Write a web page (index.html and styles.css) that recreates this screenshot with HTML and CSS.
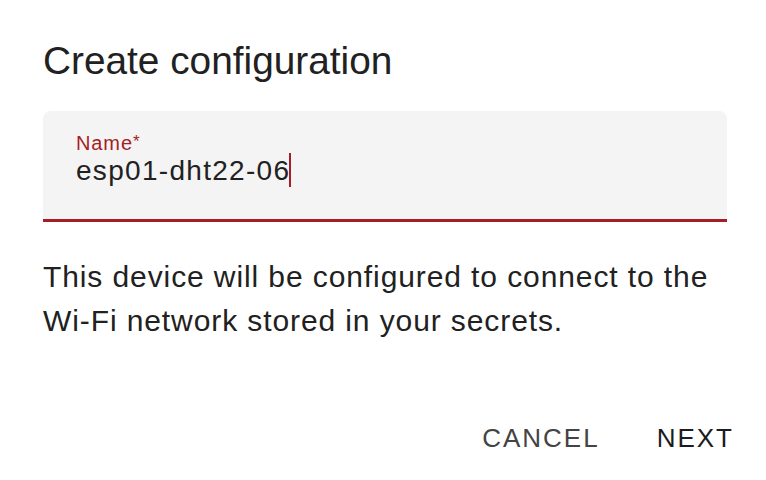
FILE: index.html
```html
<!DOCTYPE html>
<html lang="en">
<head>
<meta charset="utf-8">
<title>Create configuration</title>
<link rel="stylesheet" href="styles.css">
</head>
<body>
<div class="dialog">
  <h2 class="title">Create configuration</h2>
  <div class="field">
    <label class="label">Name<span class="req">*</span></label>
    <div class="value">esp01-dht22-06<span class="caret"></span></div>
  </div>
  <p class="desc">This device will be configured to connect to the Wi-Fi network stored in your secrets.</p>
  <div class="actions">
    <button class="btn btn-cancel">Cancel</button>
    <button class="btn btn-next">Next</button>
  </div>
</div>
</body>
</html>
```
FILE: styles.css
```css
html, body {
  margin: 0;
  padding: 0;
  background: #ffffff;
}
body {
  font-family: "Liberation Sans", Arial, sans-serif;
  color: #212121;
}
.dialog {
  width: 766px;
  height: 480px;
  box-sizing: border-box;
  padding: 38px 43px 0 43px;
  display: flex;
  flex-direction: column;
}
.title {
  margin: 0;
  font-size: 38.8px;
  line-height: 46px;
  font-weight: 400;
  color: #212121;
}
.field {
  margin-top: 27px;
  margin-right: -4px;
  background: #f4f4f4;
  border-radius: 8px 8px 0 0;
  border-bottom: 3px solid #a51e26;
  padding: 21px 33px 0 33px;
  display: flex;
  flex-direction: column;
  height: 87px;
}
.label {
  font-size: 20px;
  line-height: 20px;
  color: #a51e26;
  letter-spacing: 0.9px;
}
.req {
  font-size: 17px;
  vertical-align: 3px;
  margin-left: 0;
}
.value {
  font-size: 28px;
  line-height: 26px;
  letter-spacing: 1.3px;
  color: #212121;
}
.caret {
  display: inline-block;
  width: 2px;
  height: 34px;
  background: #a51e26;
  vertical-align: -7px;
  margin-left: -1px;
}
.desc {
  margin: 33px 0 0 0;
  font-size: 30px;
  line-height: 44px;
  letter-spacing: 0.9px;
  color: #212121;
}
.actions {
  margin-top: 77px;
  display: flex;
  justify-content: flex-end;
  gap: 57px;
  margin-right: -11px;
}
.btn {
  background: none;
  border: none;
  padding: 0;
  font-family: "Liberation Sans", Arial, sans-serif;
  font-size: 26px;
  line-height: 36px;
  letter-spacing: 2px;
  text-transform: uppercase;
  cursor: pointer;
}
.btn-cancel {
  color: #444444;
}
.btn-next {
  color: #1c1c1c;
}
```
